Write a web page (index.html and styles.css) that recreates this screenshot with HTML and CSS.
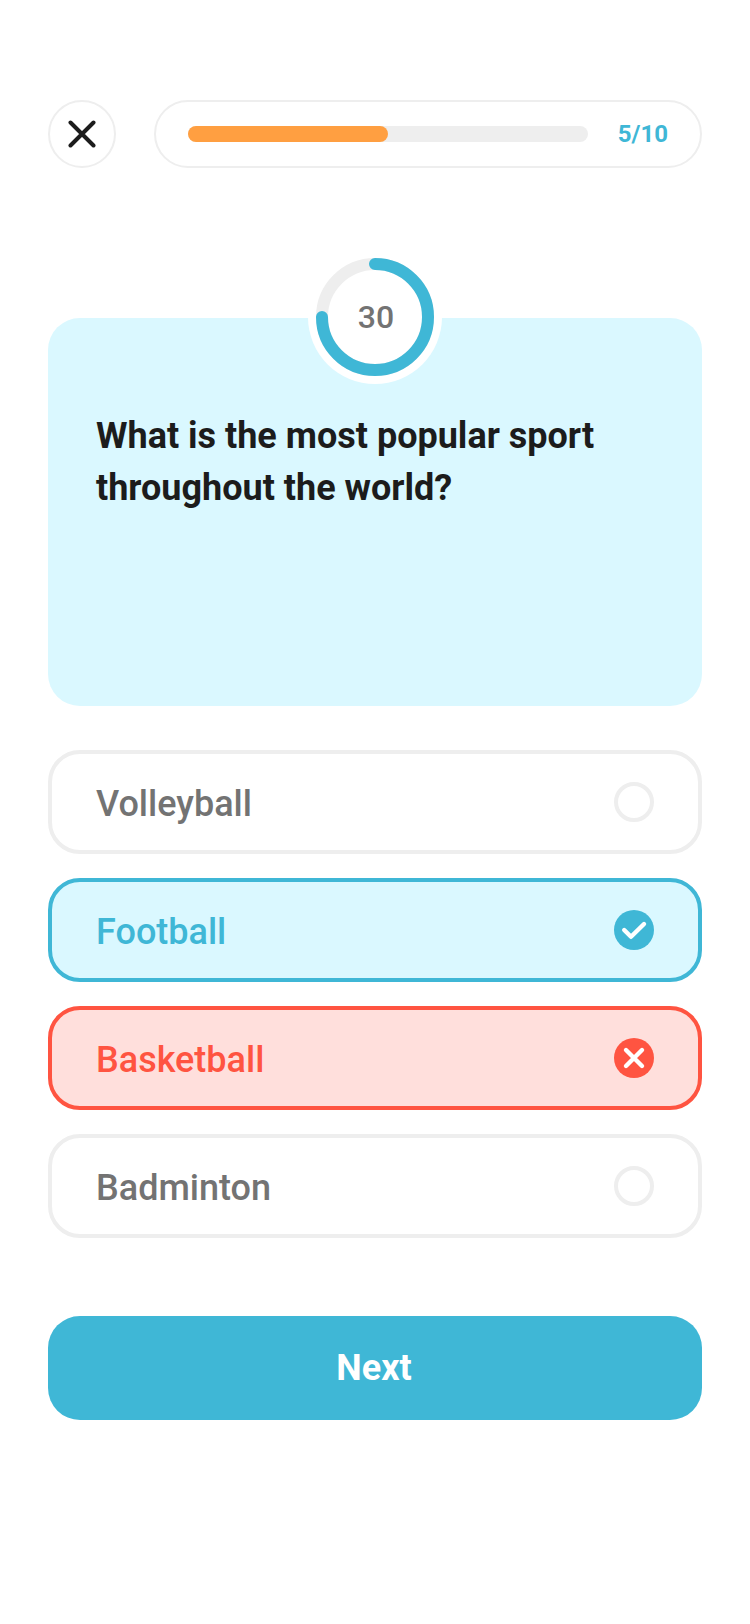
FILE: index.html
```html
<!DOCTYPE html>
<html lang="en">
<head>
<meta charset="utf-8">
<title>Quiz</title>
<link rel="stylesheet" href="styles.css">
</head>
<body>
<main class="screen">
  <header class="topbar">
    <button class="close" aria-label="Close">
      <svg width="28" height="28" viewBox="0 0 28 28"><path d="M2.5 2.5 25.5 25.5M25.5 2.5 2.5 25.5"/></svg>
    </button>
    <div class="progress">
      <div class="track"><div class="fill"></div></div>
      <span class="count">5/10</span>
    </div>
  </header>

  <section class="question">
    <div class="timer">
      <svg class="ring" width="134" height="134" viewBox="0 0 134 134">
        <circle class="ring-base" cx="67" cy="67" r="53"/>
        <path class="ring-value" d="M67 14A53 53 0 1 1 14 67"/>
      </svg>
      <span class="seconds">30</span>
    </div>
    <h1 class="question-text">What is the most popular sport throughout the world?</h1>
  </section>

  <section class="options">
    <button class="option"><span class="label">Volleyball</span><span class="radio"></span></button>
    <button class="option correct"><span class="label">Football</span>
      <svg class="mark" width="40" height="40" viewBox="0 0 40 40"><circle cx="20" cy="20" r="20"/><path d="M10.2 20 17 26.8 30 14"/></svg>
    </button>
    <button class="option wrong"><span class="label">Basketball</span>
      <svg class="mark" width="40" height="40" viewBox="0 0 40 40"><circle cx="20" cy="20" r="20"/><path d="M12 12 28 28M28 12 12 28"/></svg>
    </button>
    <button class="option"><span class="label">Badminton</span><span class="radio"></span></button>
  </section>

  <button class="next">Next</button>
</main>
</body>
</html>
```
FILE: styles.css
```css
* { box-sizing: border-box; }

body {
  margin: 0;
  background: #fff;
  font-family: Roboto, "Liberation Sans", sans-serif;
}

button {
  margin: 0;
  padding: 0;
  border: 0;
  background: none;
  font: inherit;
}

.screen {
  width: 750px;
  height: 1624px;
  padding: 100px 48px 0;
}

.topbar {
  display: flex;
  gap: 38px;
  height: 68px;
}

.close {
  display: flex;
  align-items: center;
  justify-content: center;
  width: 68px;
  height: 68px;
  border: 2px solid #eee;
  border-radius: 50%;
}

.close svg {
  fill: none;
  stroke: #1c1c1c;
  stroke-width: 4;
  stroke-linecap: round;
}

.progress {
  flex: 1;
  display: flex;
  align-items: center;
  justify-content: space-between;
  padding: 0 32px;
  border: 2px solid #eee;
  border-radius: 34px;
}

.track {
  width: 400px;
  height: 16px;
  border-radius: 8px;
  background: #eee;
}

.fill {
  width: 50%;
  height: 16px;
  border-radius: 8px;
  background: #ff9f41;
}

.count {
  color: #3fb7d6;
  font-size: 24px;
  font-weight: 700;
}

.question {
  position: relative;
  height: 388px;
  margin-top: 150px;
  padding: 92px 48px 0;
  border-radius: 32px;
  background: #daf8ff;
}

.timer {
  position: absolute;
  top: -68px;
  left: 260px;
  width: 134px;
  height: 134px;
  display: grid;
  place-items: center;
  border-radius: 50%;
  background: #fff;
}

.ring,
.seconds { grid-area: 1 / 1; }

.ring { fill: none; stroke-width: 12; }
.ring-base { stroke: #eee; }
.ring-value { stroke: #3fb7d6; stroke-linecap: round; }

.seconds {
  padding-left: 2px;
  color: #737373;
  font-size: 32px;
  font-weight: 500;
}

.question-text {
  margin: 0;
  color: #1c1c1c;
  font-size: 36px;
  font-weight: 700;
  line-height: 52px;
}

.options {
  display: flex;
  flex-direction: column;
  gap: 24px;
  margin-top: 44px;
}

.option {
  display: flex;
  align-items: center;
  justify-content: space-between;
  height: 104px;
  padding: 0 44px;
  border: 4px solid #eee;
  border-radius: 32px;
  color: #737373;
  font-size: 36px;
  font-weight: 500;
}

.label { padding-top: 3px; }

.correct { border-color: #3fb7d6; background: #daf8ff; color: #3fb7d6; }
.wrong { border-color: #ff5441; background: #ffdfdc; color: #ff5441; }

.radio {
  width: 40px;
  height: 40px;
  border: 4px solid #eee;
  border-radius: 50%;
}

.mark circle { fill: currentColor; }

.mark path {
  fill: none;
  stroke: #fff;
  stroke-width: 4.4;
  stroke-linecap: round;
  stroke-linejoin: round;
}

.next {
  width: 100%;
  height: 104px;
  margin-top: 78px;
  padding-right: 2px;
  border-radius: 32px;
  background: #3fb7d6;
  color: #fff;
  font-size: 36px;
  font-weight: 700;
}
```
